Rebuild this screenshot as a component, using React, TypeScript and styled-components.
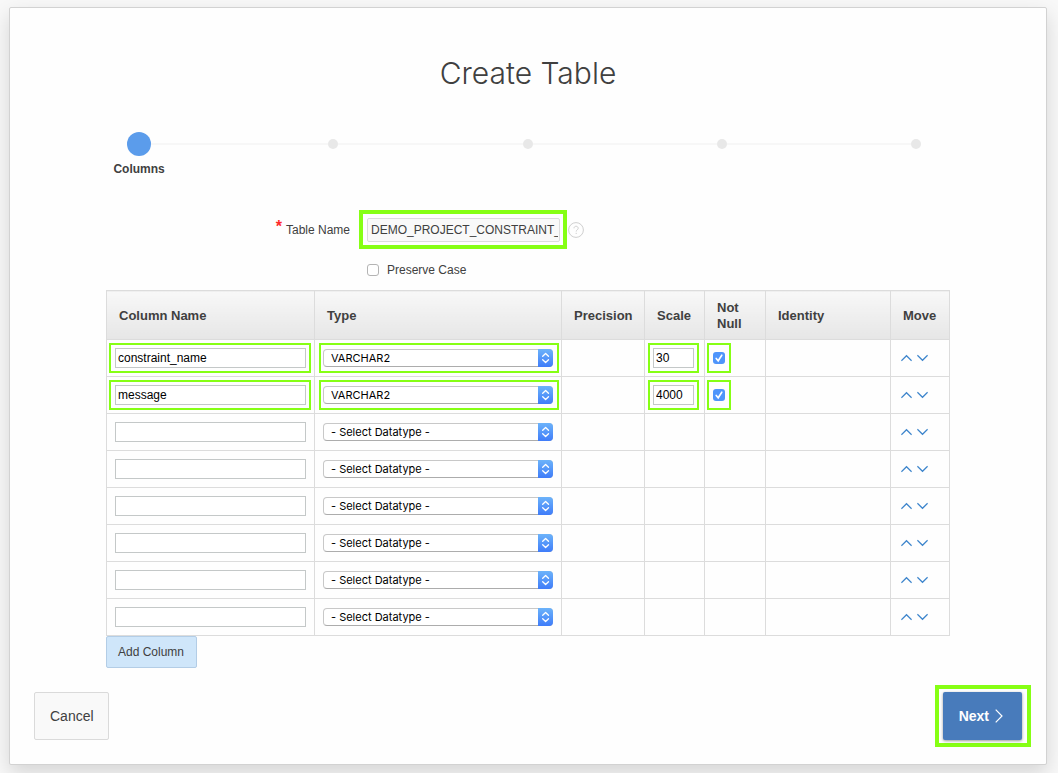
import React, { useState } from 'react';
import styled, { createGlobalStyle, css } from 'styled-components';

const GREEN = '#86ff14';
const LINE = '#dcdcdc';
const TEXT = '#404040';

const GlobalStyle = createGlobalStyle`
  *, *::before, *::after { box-sizing: border-box; }
  body {
    margin: 0;
    background: #f8f8f8;
    color: ${TEXT};
    font: 12px/16px "Liberation Sans", Arial, sans-serif;
  }
  button, input, select { font: inherit; color: inherit; margin: 0; }
`;

const Page = styled.div`
  padding: 7px 11px 8px 9px;
`;

const Card = styled.main`
  background: #fefefe;
  border: 1px solid #d2d2d2;
  border-radius: 2px;
  box-shadow: 0 8px 20px rgba(0, 0, 0, 0.14);
`;

const Title = styled.h1`
  margin: 0;
  padding-top: 45px;
  text-align: center;
  font: 300 30px/40px Inter, "Liberation Sans", sans-serif;
`;

const Steps = styled.ol`
  display: flex;
  list-style: none;
  margin: 0;
  padding: 39px 33px 0 32px;
`;

const Step = styled.li`
  flex: 1;
  display: flex;
  flex-direction: column;
  align-items: center;
  gap: 5px;
  font-weight: bold;
`;

const Track = styled.div`
  align-self: stretch;
  display: flex;
  align-items: center;
  height: 24px;
`;

const Rail = styled.span<{ $hidden?: boolean }>`
  flex: 1;
  height: 2px;
  background: ${(p) => (p.$hidden ? 'transparent' : '#f7f7f7')};
`;

const Dot = styled.span<{ $active?: boolean }>`
  width: ${(p) => (p.$active ? 24 : 10)}px;
  height: ${(p) => (p.$active ? 24 : 10)}px;
  border-radius: 50%;
  background: ${(p) => (p.$active ? '#5b9ceb' : '#e8e8e8')};
`;

const Content = styled.section`
  padding: 33px 96px 0;
`;

const FieldRow = styled.div`
  display: flex;
  align-items: center;
`;

const NameLabel = styled.label`
  display: flex;
  justify-content: flex-end;
  gap: 4px;
  width: 244px;
  margin-right: 9px;
`;

const Required = styled.span`
  color: #ff2a2a;
  font-size: 16px;
  font-weight: bold;
  line-height: 10px;
`;

const NameBox = styled.div`
  border: 4px solid ${GREEN};
  padding: 4px 3px 3px 4px;
`;

const NameInput = styled.input`
  display: block;
  width: 193px;
  height: 24px;
  padding: 0 1px 0 3px;
  border: 1px solid ${LINE};
  border-radius: 2px;
  background: #f9f9f9;
`;

const HelpButton = styled.button`
  display: flex;
  padding: 0;
  margin-left: 1px;
  border: 0;
  background: none;
`;

const CaseRow = styled.label`
  display: flex;
  align-items: center;
  gap: 8px;
  padding: 13px 0 12px 261px;
`;

const Check = styled.input.attrs({ type: 'checkbox' })`
  appearance: none;
  display: block;
  width: 12px;
  height: 12px;
  border: 1px solid #b4b4b4;
  border-radius: 3px;
  background: #fff;
  &:checked {
    border: 0;
    background: #4f95fb;
  }
`;

const CheckWrap = styled.span`
  position: relative;
  display: block;
  width: 12px;
  height: 12px;
  svg {
    position: absolute;
    inset: 0;
    pointer-events: none;
  }
`;

const Table = styled.table`
  width: 100%;
  table-layout: fixed;
  border-collapse: collapse;
`;

const Th = styled.th`
  height: 49px;
  padding: 2px 12px 0;
  border: 1px solid ${LINE};
  background: linear-gradient(#f8f8f8, #e6e6e6);
  text-align: left;
  font-size: 13px;
  line-height: 16px;
`;

const Td = styled.td<{ $inset?: number; $end?: number }>`
  height: 37px;
  padding: 3px ${(p) => p.$end ?? 2}px 3px ${(p) => p.$inset ?? 2}px;
  border: 1px solid ${LINE};
`;

const Mark = styled.div<{ $on?: boolean; $pad: string; $fit?: boolean }>`
  display: flex;
  align-items: center;
  width: ${(p) => (p.$fit ? 'fit-content' : 'auto')};
  height: 30px;
  padding: ${(p) => p.$pad};
  border: 2px solid ${(p) => (p.$on ? GREEN : 'transparent')};
`;

const CellInput = styled.input<{ $narrow?: boolean }>`
  ${(p) => (p.$narrow ? css`width: 41px;` : css`width: 100%;`)}
  height: 20px;
  padding: 0 2px;
  border: 1px solid #c4c8c8;
  background: #fff;
  color: #000;
`;

const SelectWrap = styled.div`
  position: relative;
  flex: 1;
  height: 18px;
  svg {
    position: absolute;
    top: 0;
    right: 0;
    pointer-events: none;
  }
`;

const Select = styled.select`
  appearance: none;
  display: block;
  width: 100%;
  height: 18px;
  padding: 0 18px 0 7px;
  border: 1px solid #c8c8c8;
  border-bottom-color: #acacac;
  border-radius: 4px;
  background: #fff;
  color: #000;
  font: 11px/16px Inter, "Liberation Sans", sans-serif;
`;

const Moves = styled.div`
  display: flex;
  gap: 5px;
`;

const MoveButton = styled.button`
  display: flex;
  padding: 0;
  border: 0;
  background: none;
`;

const AddButton = styled.button`
  display: block;
  height: 32px;
  padding: 0 12px 0 11px;
  border: 1px solid #b3cde6;
  border-radius: 2px;
  background: #cfe6fa;
`;

const Footer = styled.footer`
  display: flex;
  justify-content: space-between;
  align-items: center;
  padding: 17px 15px 17px 24px;
  font-size: 14px;
`;

const CancelButton = styled.button`
  height: 48px;
  padding: 0 14px 0 15px;
  border: 1px solid #dadada;
  border-radius: 2px;
  background: #f9f9f9;
`;

const NextBox = styled.div`
  border: 4px solid ${GREEN};
  padding: 3px 5px 3px 4px;
`;

const NextButton = styled.button`
  display: flex;
  align-items: center;
  gap: 6px;
  height: 48px;
  padding: 0 19px 0 16px;
  border: 0;
  border-radius: 2px;
  background: #487bbb;
  color: #fff;
  font-weight: bold;
  box-shadow: 0 1px 3px rgba(0, 0, 0, 0.4);
`;

const steps = ['Columns', '', '', '', ''];

const columns = [
  { name: 'constraint_name', type: 'VARCHAR2', scale: '30' },
  { name: 'message', type: 'VARCHAR2', scale: '4000' },
  ...Array.from({ length: 6 }, () => ({ name: '', type: '', scale: '' })),
];

const headings: [string, string][] = [
  ['Column Name', '208px'],
  ['Type', '247px'],
  ['Precision', '83px'],
  ['Scale', '60px'],
  ['Not Null', '61px'],
  ['Identity', 'auto'],
  ['Move', '59px'],
];

function Stepper() {
  return (
    <svg width="15" height="18" viewBox="0 0 15 18" aria-hidden="true">
      <defs>
        <linearGradient id="stepper" x1="0" y1="0" x2="0" y2="1">
          <stop offset="0" stopColor="#6cb3fa" />
          <stop offset="1" stopColor="#3f7cf9" />
        </linearGradient>
      </defs>
      <path d="M0 0h11a4 4 0 0 1 4 4v10a4 4 0 0 1-4 4H0z" fill="url(#stepper)" />
      <path d="M4.7 7.3 7.6 4.5l2.9 2.8M4.7 10.7l2.9 2.8 2.9-2.8" fill="none" stroke="#fff" strokeWidth="1.3" strokeLinecap="round" strokeLinejoin="round" />
    </svg>
  );
}

function Chevron({ down }: { down?: boolean }) {
  return (
    <svg width="11" height="8" viewBox="0 0 11 8" fill="none" stroke="#3d85cc" strokeWidth="1.2" aria-hidden="true">
      <path d={down ? 'M.4 1.3 5.5 6.3l5.1-5' : 'M.4 6.7 5.5 1.7l5.1 5'} />
    </svg>
  );
}

export default function App() {
  const [rows, setRows] = useState(columns);
  const move = (from: number, to: number) => {
    if (to < 0 || to >= rows.length) return;
    const next = [...rows];
    [next[from], next[to]] = [next[to], next[from]];
    setRows(next);
  };
  const update = (index: number, patch: Partial<(typeof columns)[number]>) =>
    setRows(rows.map((row, i) => (i === index ? { ...row, ...patch } : row)));

  return (
    <Page>
      <GlobalStyle />
      <Card>
        <Title>Create Table</Title>
        <Steps>
          {steps.map((label, i) => (
            <Step key={i}>
              <Track>
                <Rail $hidden={i === 0} />
                <Dot $active={i === 0} />
                <Rail $hidden={i === steps.length - 1} />
              </Track>
              <span>{label || '\u00a0'}</span>
            </Step>
          ))}
        </Steps>
        <Content>
          <FieldRow>
            <NameLabel htmlFor="table-name">
              <Required>*</Required>Table Name
            </NameLabel>
            <NameBox>
              <NameInput id="table-name" defaultValue="DEMO_PROJECT_CONSTRAINT_LOOKUP" />
            </NameBox>
            <HelpButton type="button" aria-label="Help">
              <svg width="16" height="16" viewBox="0 0 16 16" fill="none" stroke="#cfcfcf" aria-hidden="true">
                <circle cx="8" cy="8" r="7.4" />
                <path d="M6 6.3c0-2.8 4.2-2.6 4.2 0 0 1.5-2 1.5-2 3.2M8.2 10.8v1.2" />
              </svg>
            </HelpButton>
          </FieldRow>
          <CaseRow>
            <Check />
            Preserve Case
          </CaseRow>
          <Table>
            <colgroup>
              {headings.map(([label, width]) => (
                <col key={label} style={{ width }} />
              ))}
            </colgroup>
            <thead>
              <tr>
                {headings.map(([label]) => (
                  <Th key={label} scope="col">{label}</Th>
                ))}
              </tr>
            </thead>
            <tbody>
              {rows.map((row, i) => {
                const filled = row.type !== '';
                return (
                  <tr key={i}>
                    <Td $end={3}>
                      <Mark $on={filled} $pad="0 3px 0 4px">
                        <CellInput aria-label="Column Name" value={row.name} onChange={(e) => update(i, { name: e.target.value })} />
                      </Mark>
                    </Td>
                    <Td $inset={4}>
                      <Mark $on={filled} $pad="0 4px 0 2px">
                        <SelectWrap>
                          <Select aria-label="Type" value={row.type} onChange={(e) => update(i, { type: e.target.value })}>
                            <option value="">- Select Datatype -</option>
                            <option>VARCHAR2</option>
                          </Select>
                          <Stepper />
                        </SelectWrap>
                      </Mark>
                    </Td>
                    <Td />
                    <Td $inset={3}>
                      {filled && (
                        <Mark $on $fit $pad="0 3px">
                          <CellInput $narrow aria-label="Scale" value={row.scale} onChange={(e) => update(i, { scale: e.target.value })} />
                        </Mark>
                      )}
                    </Td>
                    <Td>
                      {filled && (
                        <Mark $on $fit $pad="0 4px">
                          <CheckWrap>
                            <Check aria-label="Not Null" defaultChecked />
                            <svg width="12" height="12" viewBox="0 0 12 12" fill="none" stroke="#fff" strokeWidth="1.6" strokeLinecap="round" aria-hidden="true">
                              <path d="M3.2 6.4 5.2 8.8 8.8 3.2" />
                            </svg>
                          </CheckWrap>
                        </Mark>
                      )}
                    </Td>
                    <Td />
                    <Td $inset={10}>
                      <Moves>
                        <MoveButton type="button" aria-label="Move up" onClick={() => move(i, i - 1)}><Chevron /></MoveButton>
                        <MoveButton type="button" aria-label="Move down" onClick={() => move(i, i + 1)}><Chevron down /></MoveButton>
                      </Moves>
                    </Td>
                  </tr>
                );
              })}
            </tbody>
          </Table>
          <AddButton type="button" onClick={() => setRows([...rows, { name: '', type: '', scale: '' }])}>Add Column</AddButton>
        </Content>
        <Footer>
          <CancelButton type="button">Cancel</CancelButton>
          <NextBox>
            <NextButton type="button">
              Next
              <svg width="8" height="14" viewBox="0 0 8 14" fill="none" stroke="#fff" strokeWidth="1.2" aria-hidden="true">
                <path d="M.7.6 7 7 .7 13.4" />
              </svg>
            </NextButton>
          </NextBox>
        </Footer>
      </Card>
    </Page>
  );
}
